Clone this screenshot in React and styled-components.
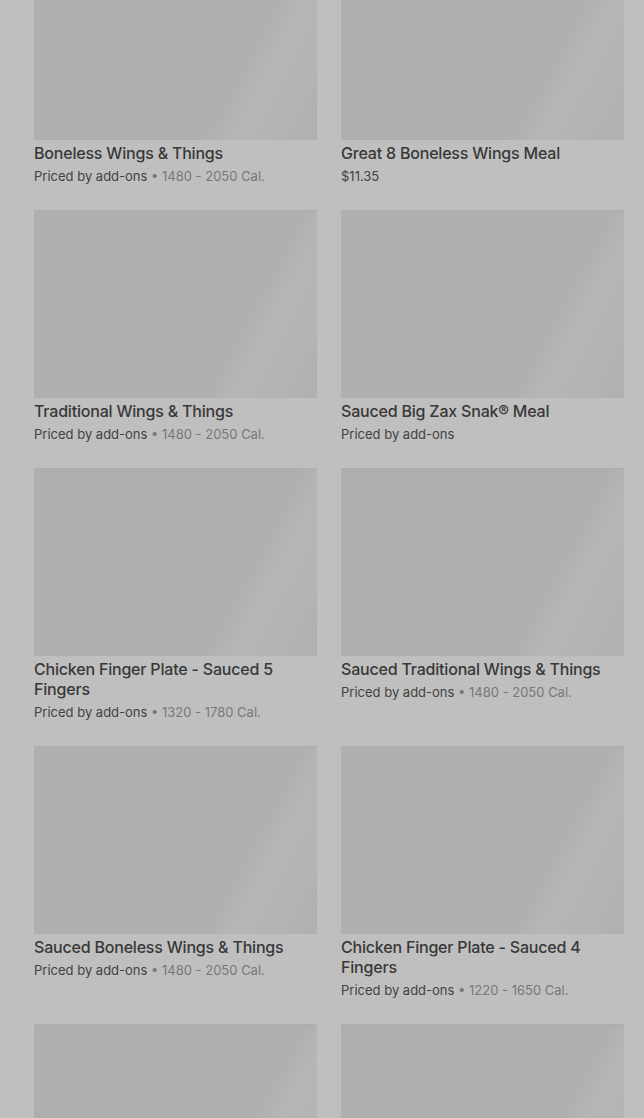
import React from "react";
import styled, { createGlobalStyle } from "styled-components";

const Global = createGlobalStyle`
  html, body { margin: 0; padding: 0; background: #bfbfbf; }
  body { font-family: Inter, "Noto Sans", sans-serif; overflow: hidden; }
`;

const Page = styled.div`
  background: #bfbfbf;
  padding: 0 20px 0 34px;
  overflow: hidden;
  height: 1118px;
  box-sizing: border-box;
`;

const Grid = styled.div`
  display: grid;
  grid-template-columns: 283px 283px;
  column-gap: 24px;
  row-gap: 24px;
  margin-top: -48px;
`;

const Card = styled.div`
  display: flex;
  flex-direction: column;
`;

const Thumb = styled.div`
  height: 188px;
  background: linear-gradient(118deg, #afafaf 0%, #afafaf 70%, #b6b6b6 78%, #b3b3b3 90%, #b0b0b0 100%);
  box-shadow: inset 0 1px 0 #acacac;
`;

const Title = styled.div`
  margin-top: 3px;
  font-size: 16px;
  line-height: 20px;
  font-weight: 500;
  letter-spacing: -0.2px;
  color: #383838;
`;

const Sub = styled.div`
  margin-top: 3px;
  font-size: 13px;
  line-height: 20px;
  color: #424242;
`;

const Cal = styled.span`
  color: #787878;
`;

const items = [
  { t: "Boneless Wings & Things", s: "Priced by add-ons", c: "1480 - 2050 Cal." },
  { t: "Great 8 Boneless Wings Meal", s: "$11.35" },
  { t: "Traditional Wings & Things", s: "Priced by add-ons", c: "1480 - 2050 Cal." },
  { t: "Sauced Big Zax Snak® Meal", s: "Priced by add-ons" },
  { t: "Chicken Finger Plate - Sauced 5 Fingers", s: "Priced by add-ons", c: "1320 - 1780 Cal." },
  { t: "Sauced Traditional Wings & Things", s: "Priced by add-ons", c: "1480 - 2050 Cal." },
  { t: "Sauced Boneless Wings & Things", s: "Priced by add-ons", c: "1480 - 2050 Cal." },
  { t: "Chicken Finger Plate - Sauced 4 Fingers", s: "Priced by add-ons", c: "1220 - 1650 Cal." },
  { t: "", s: "" },
  { t: "", s: "" },
];

export default function App() {
  return (
    <>
      <Global />
      <Page>
        <Grid>
          {items.map((it, i) => (
            <Card key={i}>
              <Thumb />
              <Title>{it.t}</Title>
              <Sub>
                {it.s}
                {it.c && <Cal> • {it.c}</Cal>}
              </Sub>
            </Card>
          ))}
        </Grid>
      </Page>
    </>
  );
}
